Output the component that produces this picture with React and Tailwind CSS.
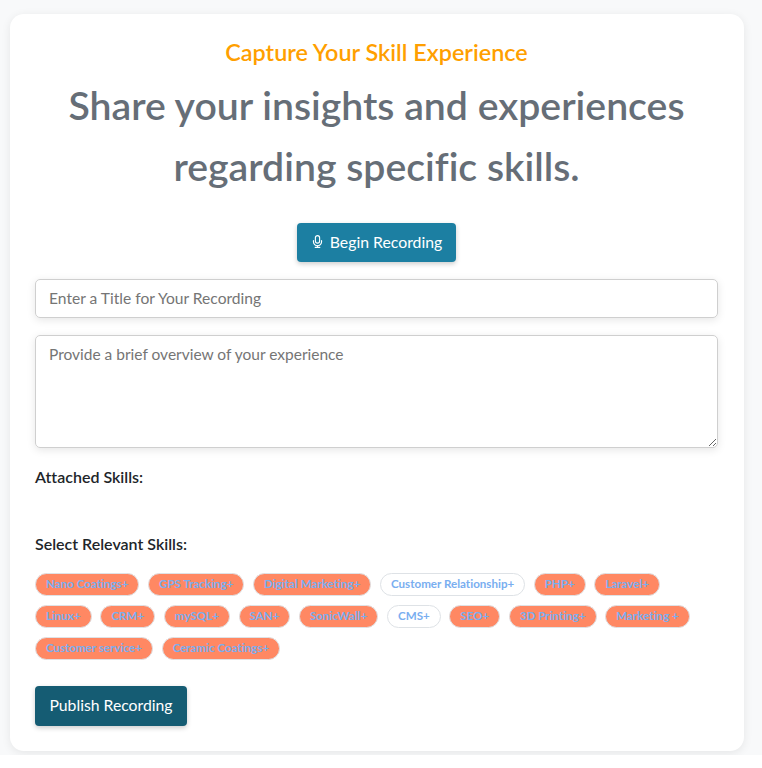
import React from "react";

const skills = [
  ["Nano Coatings+", 1], ["GPS Tracking+", 1], ["Digital Marketing+", 1], ["Customer Relationship+", 0], ["PHP+", 1], ["Laravel+", 1],
  ["Linux+", 1], ["CRM+", 1], ["mySQL+", 1], ["SAN+", 1], ["SonicWall+", 1], ["CMS+", 0], ["SEO+", 1], ["3D Printing+", 1], ["Marketing +", 1],
  ["Customer service+", 1], ["Ceramic Coatings+", 1],
];

function Mic() {
  return (
    <svg width="13" height="15" viewBox="0 0 16 16" fill="none" stroke="currentColor" strokeWidth="1.4" strokeLinecap="round" className="shrink-0">
      <rect x="5.4" y="0.8" width="5.2" height="9.2" rx="2.6" />
      <path d="M3 7v1.2a5 5 0 0 0 10 0V7" />
      <path d="M8 13.2v2M5.2 15.3h5.6" />
    </svg>
  );
}

export default function App() {
  return (
    <div className="bg-[#f8f9fa] pt-[14px] pl-[10px] pr-[18px] pb-[4px] font-['Lato','Open_Sans',sans-serif] [font-variant-ligatures:none]">
      <div className="bg-white rounded-[14px] shadow-[0_2px_10px_rgba(0,0,0,0.08)] h-[737px] pl-[25px] pr-[26px] pt-[23px]">
        <div className="text-center text-[23.4px] leading-[30px] font-semibold text-[#ff9f00]">Capture Your Skill Experience</div>
        <h1 className="text-center text-[39.2px] leading-[61px] font-semibold text-[#666e77] mt-[7px]">
          Share your insights and experiences<br />regarding specific skills.
        </h1>
        <div className="flex justify-center mt-[27px]">
          <button className="h-[39px] w-[159px] pb-[2px] rounded-[4px] bg-[#1c7fa2] text-white text-[15.8px] flex items-center justify-center gap-[6px] shadow-[0_2px_5px_rgba(0,0,0,0.2)]">
            <Mic />
            Begin Recording
          </button>
        </div>
        <input
          placeholder="Enter a Title for Your Recording"
          className="block w-full h-[39px] mt-[17px] pb-[2px] rounded-[5px] border border-[#cfcfcf] px-[13px] text-[15.6px] placeholder:text-[#757575] shadow-[0_2px_8px_rgba(0,0,0,0.1)] outline-none"
        />
        <textarea
          placeholder="Provide a brief overview of your experience"
          className="block w-full h-[113px] mt-[17px] rounded-[5px] border border-[#cfcfcf] px-[13px] py-[7px] text-[15.5px] placeholder:text-[#757575] shadow-[0_2px_8px_rgba(0,0,0,0.1)] outline-none"
        />
        <div className="mt-[18px] text-[16px] leading-[22px] font-semibold text-[#212529]">Attached Skills:</div>
        <div className="mt-[45px] text-[16px] leading-[22px] font-semibold text-[#212529]">Select Relevant Skills:</div>
        <div className="flex flex-wrap gap-x-[8.6px] gap-y-[9px] mt-[18px]">
          {skills.map(([name, on]) => (
            <span
              key={name}
              className={`h-[23px] rounded-full border border-[#dee2e6] px-[10px] text-[11.6px] leading-[20px] font-bold text-[#79aef0] ${on ? "bg-[#ff8863]" : "bg-white"}`}
            >
              {name}
            </span>
          ))}
        </div>
        <button className="mt-[26px] block h-[40px] w-[152px] pb-[2px] rounded-[4px] bg-[#155c73] text-white text-[15.75px] shadow-[0_2px_5px_rgba(0,0,0,0.2)]">
          Publish Recording
        </button>
      </div>
    </div>
  );
}
